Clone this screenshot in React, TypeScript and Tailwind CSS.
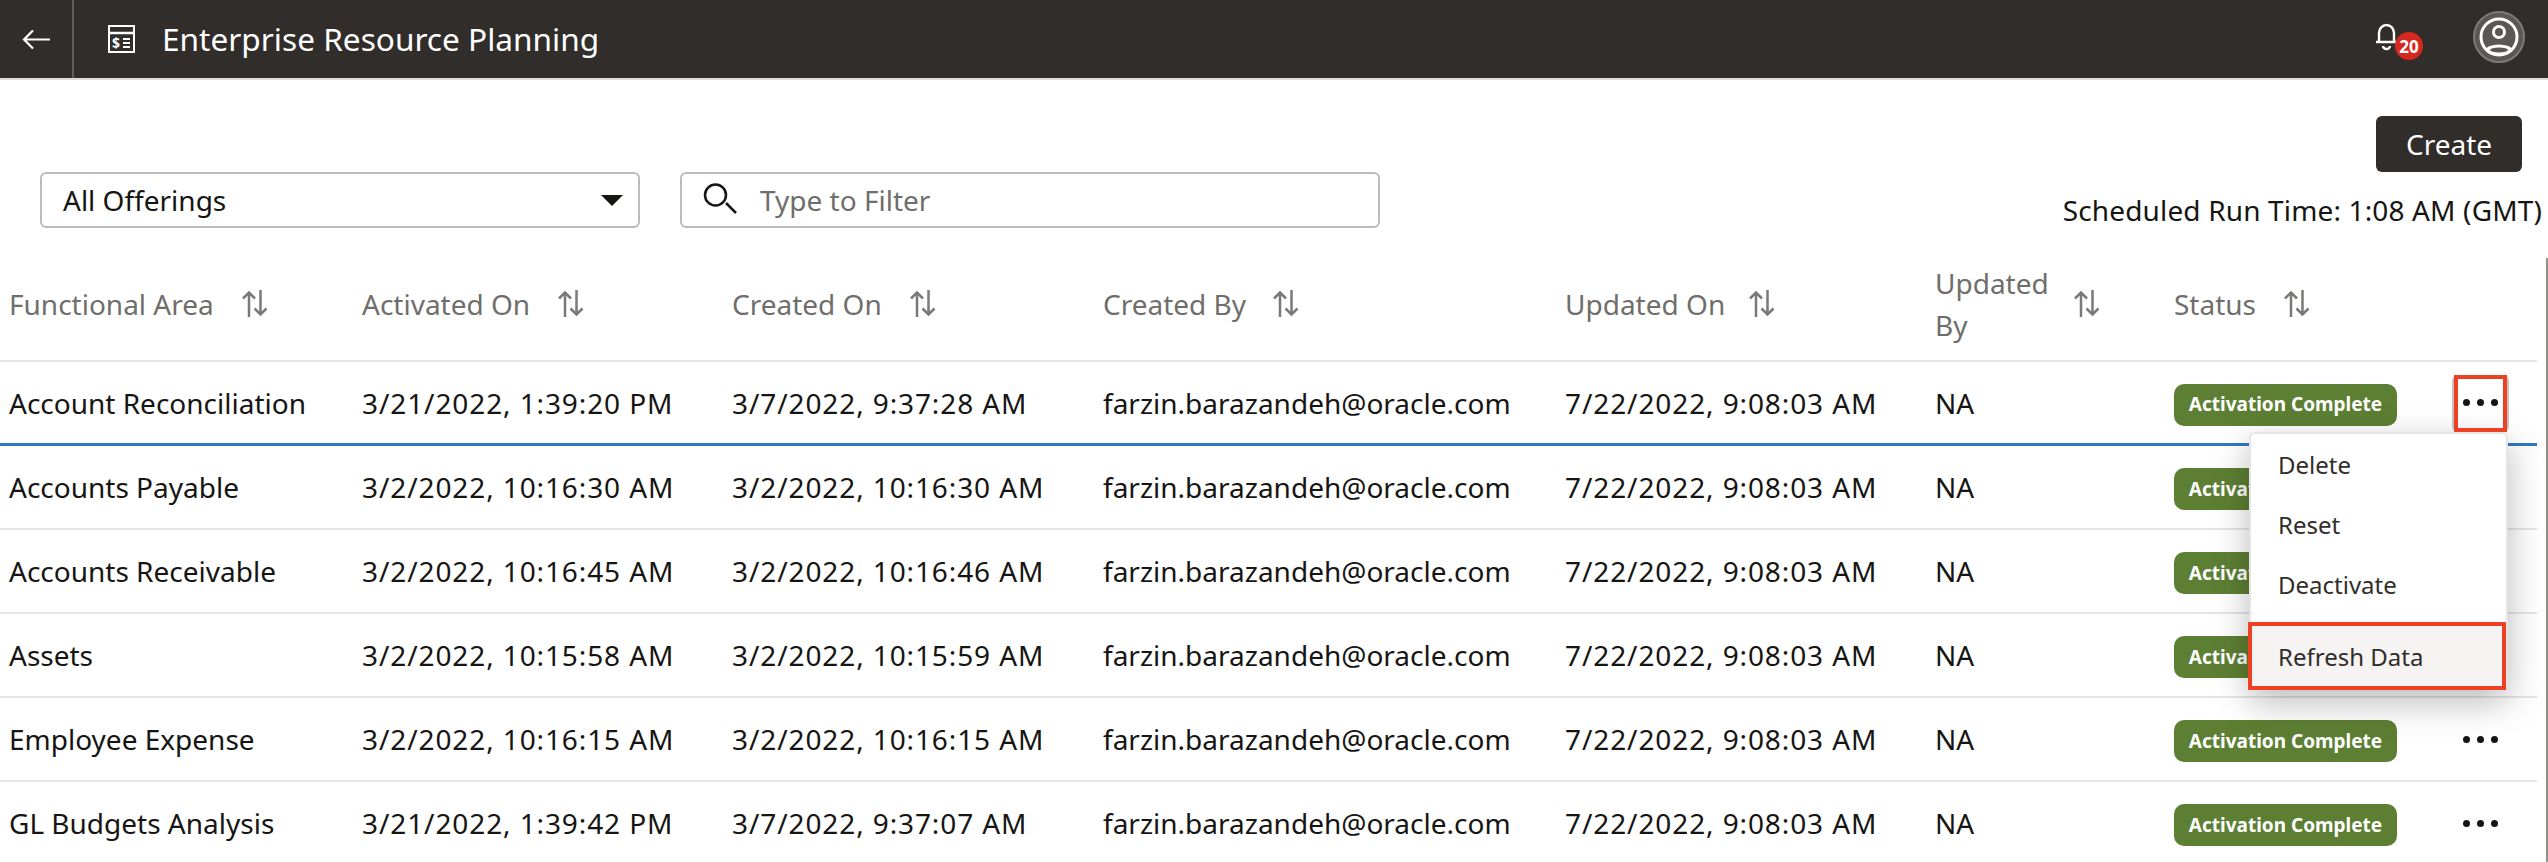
const font = { fontFamily: '"Noto Sans", sans-serif' };

type Row = {
  area: string;
  activated: string;
  created: string;
};

const rows: Row[] = [
  { area: 'Account Reconciliation', activated: '3/21/2022, 1:39:20 PM', created: '3/7/2022, 9:37:28 AM' },
  { area: 'Accounts Payable', activated: '3/2/2022, 10:16:30 AM', created: '3/2/2022, 10:16:30 AM' },
  { area: 'Accounts Receivable', activated: '3/2/2022, 10:16:45 AM', created: '3/2/2022, 10:16:46 AM' },
  { area: 'Assets', activated: '3/2/2022, 10:15:58 AM', created: '3/2/2022, 10:15:59 AM' },
  { area: 'Employee Expense', activated: '3/2/2022, 10:16:15 AM', created: '3/2/2022, 10:16:15 AM' },
  { area: 'GL Budgets Analysis', activated: '3/21/2022, 1:39:42 PM', created: '3/7/2022, 9:37:07 AM' },
];

const gridCols = 'grid grid-cols-[353px_370px_371px_462px_370px_239px_280px_82px]';

function SortIcon() {
  return (
    <svg width="26" height="27" viewBox="0 0 26 27" fill="none" stroke="#7a7977" strokeWidth="2.500">
      <path d="M7 27V2M1 8.500 7 2.500l6 6" />
      <path d="M18.500 0v25M12.500 18.500l6 6 6-6" />
    </svg>
  );
}

function HeaderCell({ label, gap = 'gap-[28px]' }: { label: React.ReactNode; gap?: string }) {
  return (
    <div className={`flex items-center ${gap} text-[28px] leading-[42px] text-[#6f6e6b]`}>
      <span>{label}</span>
      <SortIcon />
    </div>
  );
}

function Dots() {
  return (
    <div className="flex items-center justify-center gap-[7px] w-[53px] h-[54px]">
      <span className="w-[7px] h-[7px] rounded-full bg-[#161513]" />
      <span className="w-[7px] h-[7px] rounded-full bg-[#161513]" />
      <span className="w-[7px] h-[7px] rounded-full bg-[#161513]" />
    </div>
  );
}

export default function App() {
  return (
    <div className="relative w-[2548px] h-[862px] overflow-hidden bg-white text-[#161513]" style={font}>
      {/* top bar */}
      <header className="flex items-center h-[80px] bg-[#312d2a] border-b-2 border-[#dedede] text-white">
        <div className="flex items-center justify-center w-[74px] h-full border-r-2 border-[#5f5c59]">
          <svg width="29" height="21" viewBox="0 0 29 21" fill="none" stroke="white" strokeWidth="2.200">
            <path d="M28 10.500H2M11 1.500l-9 9 9 9" />
          </svg>
        </div>
        <svg className="ml-[34px]" width="27" height="28" viewBox="0 0 27 28" fill="none" stroke="white" strokeWidth="2">
          <rect x="1" y="1" width="25" height="26" />
          <path d="M1 8h25" strokeWidth="2.500" />
          <text x="4" y="23" fontSize="14" fontWeight="700" fill="white" stroke="none" fontFamily="Noto Sans">$</text>
          <path d="M15 14h7M15 18h7M15 22h7" />
        </svg>
        <span className="ml-[27px] text-[31.600px] leading-[40px]">Enterprise Resource Planning</span>
        <div className="ml-auto mr-[23px] -mt-[4px] flex items-center">
          <div className="relative w-[48px] h-[48px] mr-[50px]">
            <svg className="absolute left-0 top-[10px]" width="24" height="28" viewBox="0 0 24 28" fill="none" stroke="white" strokeWidth="2.400">
              <path d="M1 19h21M4 19V10a7.500 8 0 0 1 15 0v9" />
              <path d="M8 23a3.500 3 0 0 0 7 0" />
            </svg>
            <span className="absolute left-[20px] top-[19px] flex items-center justify-center w-[28px] h-[28px] rounded-full bg-[#d5281e] text-[17px] font-bold leading-none text-white">
              20
            </span>
          </div>
          <svg width="52" height="52" viewBox="0 0 52 52" fill="none">
            <circle cx="26" cy="26" r="25" fill="#5a5754" stroke="#7d7a78" strokeWidth="2" />
            <circle cx="26" cy="26" r="18" stroke="white" strokeWidth="3" />
            <circle cx="26" cy="21" r="5.500" stroke="white" strokeWidth="3" />
            <ellipse cx="26" cy="39" rx="13" ry="5.500" fill="white" />
            <ellipse cx="26" cy="39" rx="9" ry="2.500" fill="#5a5754" />
          </svg>
        </div>
      </header>

      {/* filters */}
      <div className="flex h-[175px]">
        <div className="flex items-start gap-[40px] pl-[40px] pt-[92px]">
          <div className="flex items-center justify-between w-[600px] h-[56px] border-2 border-[#bcbbb9] rounded-[6px] pl-[21px] pr-[15px] text-[28px]">
            <span>All Offerings</span>
            <span className="w-0 h-0 border-x-[11px] border-x-transparent border-t-[11px] border-t-[#161513]" />
          </div>
          <div className="flex items-center w-[700px] h-[56px] border-2 border-[#bcbbb9] rounded-[6px] pl-[20px] text-[28px] text-[#6f6e6b]">
            <svg width="36" height="36" viewBox="0 0 36 36" fill="none" stroke="#161513" strokeWidth="2.500">
              <circle cx="13.500" cy="13" r="10.500" />
              <path d="m24 21 10 10" />
            </svg>
            <span className="ml-[22px]">Type to Filter</span>
          </div>
        </div>
        <div className="ml-auto flex flex-col items-end pr-[6px] pt-[36px]">
          <button className="w-[146px] h-[56px] mr-[20px] rounded-[6px] bg-[#312d2a] text-[28px] text-white">Create</button>
          <div className="mt-[16px] text-[28px] leading-[44px] tracking-[0.15px] text-[#161513]">Scheduled Run Time: 1:08 AM (GMT)</div>
        </div>
      </div>

      {/* table */}
      <div className="relative">
        <div className={`${gridCols} w-[2537px] h-[107px] items-center pl-[9px] pb-[8px] box-border border-b-2 border-[#e5e5e5]`}>
          <HeaderCell label="Functional Area" />
          <HeaderCell label="Activated On" />
          <HeaderCell label="Created On" />
          <HeaderCell label="Created By" gap="gap-[27px]" />
          <HeaderCell label="Updated On" gap="gap-[24px]" />
          <HeaderCell label={<>Updated<br />By</>} gap="gap-[25px]" />
          <HeaderCell label="Status" />
          <div />
        </div>
        {rows.map((row, i) => (
          <div
            key={row.area}
            className={`${gridCols} w-[2537px] h-[84px] items-center pl-[9px] box-border text-[28px] ${i === 0 ? 'border-b-[3px] border-[#2f78c4]' : 'border-b-2 border-[#e5e5e5]'}`}
          >
            <div>{row.area}</div>
            <div className="tracking-[0.9px]">{row.activated}</div>
            <div className="tracking-[0.9px]">{row.created}</div>
            <div>farzin.barazandeh@oracle.com</div>
            <div className="tracking-[0.9px]">7/22/2022, 9:08:03 AM</div>
            <div>NA</div>
            <div>
              <span className="inline-flex items-center justify-center w-[223px] h-[42px] rounded-[10px] bg-[#5d7f33] text-[19px] font-bold text-white">
                Activation Complete
              </span>
            </div>
            <div><Dots /></div>
          </div>
        ))}
        <div className="absolute right-0 top-[3px] bottom-0 w-[2px] bg-[#8f8e8d]" />

        {/* actions menu */}
        <div className="absolute left-[2452px] top-[120px] w-[57px] h-[57px] rounded-[6px] border-x-2 border-[#c4c4c4]" />
        <div className="absolute left-[2249px] top-[177px] w-[259px] h-[258px] pt-px bg-white rounded-[6px] border-2 border-[#e5e5e5] shadow-[0_12px_36px_rgba(0,0,0,0.28)] text-[24px] text-[#312d2a]">
          <div className="flex items-center h-[60px] pl-[27px]">Delete</div>
          <div className="flex items-center h-[60px] pl-[27px]">Reset</div>
          <div className="flex items-center h-[60px] pl-[27px]">Deactivate</div>
          <div className="flex items-center h-[68px] mt-[7px] pt-[2px] pl-[27px] bg-[#f5f4f2]">Refresh Data</div>
        </div>
        <div className="absolute left-[2248px] top-[367px] w-[258px] h-[68px] border-4 border-[#ee4023]" />
        <div className="absolute left-[2454px] top-[120px] w-[53px] h-[57px] border-4 border-[#ee4023]" />
      </div>
    </div>
  );
}
